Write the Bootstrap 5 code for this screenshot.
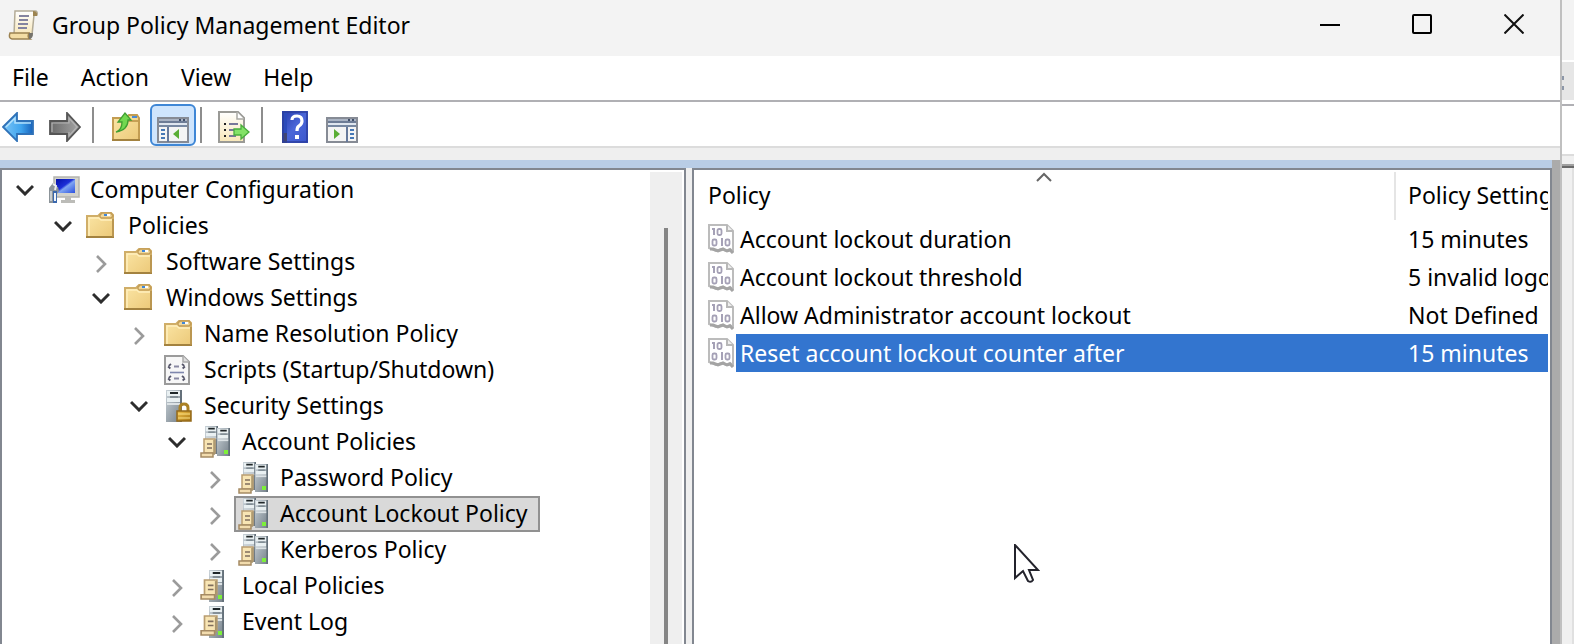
<!DOCTYPE html>
<html lang="en">
<head>
<meta charset="utf-8">
<meta name="viewport" content="width=device-width, initial-scale=1">
<title>Group Policy Management Editor</title>
<link href="https://cdn.jsdelivr.net/npm/bootstrap@5.3.0/dist/css/bootstrap.min.css" rel="stylesheet">
<style>
  :root { --line: #828790; --face: #efefef; }
  body { font-family: "Noto Sans", "Open Sans", sans-serif; font-size: 23px; line-height: 36px; color: #000; background: #fff; }
  svg { display: block; flex-shrink: 0; }
  .plain { border: 0; padding: 0; background: transparent; color: inherit; border-radius: 0; }

  .title-bar { height: 56px; background: #f3f3f3; padding-left: 8px; }
  .title-bar h1 { font-size: 23px; line-height: 36px; font-weight: 400; padding: 7px 0 0 13px; }
  .title-bar .doc-icon { margin-top: 9px; }
  .caption-btn { width: 92px; height: 48px; }

  .menu-bar { height: 44px; padding: 0 0 2px 12px; gap: 32px; }
  .menu-bar a { color: #000; text-decoration: none; }
  .tool-bar { height: 48px; border-top: 2px solid #b0b0b4; border-bottom: 2px solid #dcdcdc; padding-top: 2px; gap: 1px; }
  .tool-btn { width: 46px; height: 42px; border: 2px solid transparent; border-radius: 6px; background: transparent; padding: 3px 0 0 5px; }
  .tool-btn.first-tool { width: 41px; padding-left: 0; }
  .tool-btn.pressed { background: #cfe5fd; border-color: #3f87d6; }
  .tool-rule { width: 2px; height: 36px; background: #8d8d8d; margin: 0 8px 0 3px; }
  .dock-gap { height: 12px; background: var(--face); }
  .dock-band { height: 8px; background: #b9cde6; }

  .work { background: var(--face); gap: 6px; }
  .tree-pane { flex: 0 0 686px; max-width: 60%; border: 2px solid var(--line); border-bottom: 0; background: #fff; padding: 2px 2px 0 4px; }
  .tree ul { padding-left: 38px; }
  .tree-row { height: 36px; }
  .twist { width: 38px; height: 36px; }
  .twist.closed { padding-top: 3px; }
  .node { height: 36px; border: 2px solid transparent; padding: 0 10px 0 2px; gap: 10px; line-height: 30px; white-space: nowrap; color: #000; text-decoration: none; }
  .node.chosen { background: #d9d9d9; border-color: #919191; }
  .node-text { padding-bottom: 2px; }
  .scroll-track { width: 32px; background: var(--face); padding-top: 56px; }
  .scroll-thumb { width: 4px; background: #858585; margin-right: 14px; }

  .list-pane { border: 2px solid var(--line); border-bottom: 0; background: #fff; padding: 2px 2px 0 0; }
  .policy-table { table-layout: fixed; width: 100%; border-collapse: collapse; }
  .policy-table th { height: 48px; font-weight: 400; padding: 0 0 2px 14px; vertical-align: middle; }
  .policy-table th:first-child { border-right: 2px solid #e5e5e5; }
  .policy-table td { height: 38px; padding: 0 0 0 13px; white-space: nowrap; overflow: hidden; }
  .policy-table th:last-child { padding-left: 12px; white-space: nowrap; overflow: hidden; }
  .policy-table td:first-child { padding-left: 14px; }
  .policy-name { margin-left: 2px; padding-left: 4px; line-height: 38px; }
  .chosen-row td:last-child, .chosen-row .policy-name { background: #3375cf; color: #fff; }
  .setting-col { width: 153px; }
  .edge { width: 8px; background: #ababab; }
  .pointer { left: 320px; top: 374px; }

  .behind { width: 14px; border-left: 2px solid #c0c0c0; background: #f0f0f0; }
  .behind-title { height: 62px; background: #f3f3f3; border-bottom: 2px solid #fff; }
  .behind-tab { height: 38px; background: #e6e6e6; padding-top: 14px; }
  .behind-menu { height: 52px; border-top: 2px solid #b0b0b4; border-bottom: 2px solid #dcdcdc; background: #fff; }
  .behind-gap { height: 4px; background: #fff; }
  .behind-head { height: 4px; border-top: 2px solid #a0a0a0; border-bottom: 2px solid #696969; margin-top: 8px; }
  .behind-body { border-right: 2px solid #e0e0e0; }
</style>
</head>
<body class="vh-100 overflow-hidden d-flex">

<svg width="0" height="0" class="position-absolute" aria-hidden="true">
  <defs>
    <linearGradient id="gFolder" x1="0" y1="0" x2="1" y2="1"><stop offset="0" stop-color="#fbe6a6"/><stop offset="1" stop-color="#ecc979"/></linearGradient>
    <linearGradient id="gBlue" x1="0" y1="0" x2="1" y2="0"><stop offset="0" stop-color="#7cc6f8"/><stop offset=".6" stop-color="#3fa4ee"/><stop offset="1" stop-color="#1762bb"/></linearGradient>
    <linearGradient id="gGray" x1="0" y1="0" x2="1" y2="0"><stop offset="0" stop-color="#6a6a6a"/><stop offset="1" stop-color="#a5a5a5"/></linearGradient>
    <linearGradient id="gPaper" x1="0" y1="0" x2="0" y2="1"><stop offset="0" stop-color="#fff"/><stop offset="1" stop-color="#f8e7b8"/></linearGradient>
    <linearGradient id="gSteel" x1="0" y1="0" x2="1" y2="1"><stop offset="0" stop-color="#c9d2d8"/><stop offset="1" stop-color="#747f88"/></linearGradient>
    <linearGradient id="gScreen" x1="0" y1="0" x2="1" y2="1"><stop offset="0" stop-color="#0510a8"/><stop offset=".45" stop-color="#1c2fd8"/><stop offset=".55" stop-color="#7fa5f2"/><stop offset="1" stop-color="#2b50e0"/></linearGradient>
    <linearGradient id="gHelp" x1="0" y1="0" x2="1" y2="1"><stop offset="0" stop-color="#2438a8"/><stop offset=".5" stop-color="#4a66d8"/><stop offset="1" stop-color="#3a55cc"/></linearGradient>
    <linearGradient id="gLock" x1="0" y1="0" x2="1" y2="1"><stop offset="0" stop-color="#efc04a"/><stop offset="1" stop-color="#a87512"/></linearGradient>

    <symbol id="open" viewBox="0 0 18 12"><path d="M1 2l8 8 8-8" fill="none" stroke="#2d2d2d" stroke-width="3"/></symbol>
    <symbol id="shut" viewBox="0 0 12 18"><path d="M2 1l8 8-8 8" fill="none" stroke="#9b9b9b" stroke-width="2.6"/></symbol>

    <symbol id="folder" viewBox="0 0 32 32">
      <path d="M1 6h11l3-3h10l2 2v22H1z" fill="url(#gFolder)" stroke="#d0ae68" stroke-width="2"/>
      <path d="M14 5l2-2h9l2 3-2 2H14z" fill="#efd79a" stroke="#c39d55" stroke-width="1.500"/>
      <path d="M18 5h3" stroke="#3f86d8" stroke-width="2"/><path d="M21 5h3" stroke="#fff" stroke-width="2"/>
      <path d="M3 26V8h10l2 2h11" fill="none" stroke="#fff0bd" stroke-width="1.500"/>
      <path d="M0 27h28" stroke="#a3823f" stroke-width="2"/><path d="M27 9v18" stroke="#b5914c" stroke-width="1.600"/>
    </symbol>

    <symbol id="computer" viewBox="0 0 32 32">
      <path d="M6 3h25v20H6z" fill="#d3d3cc" stroke="#b4b4ae" stroke-width="1.500"/>
      <path d="M8 5h19v14H8z" fill="url(#gScreen)"/>
      <path d="M17 23h6v3h4v3H13v-3h4z" fill="#bcbcb8"/>
      <path d="M1 14l4-5 2 3 3 1 1 4-2 3v4H6v5H1z" fill="#8c9499"/>
      <path d="M2 17h2v10H2z" fill="#c6cbce"/><path d="M5 10l3 2-1 4" stroke="#eee" stroke-width="2" fill="none"/>
      <path d="M5 17h4v12H5z" fill="#3b68ad"/><path d="M6 19h2v8H6z" fill="#f2f6fa"/>
    </symbol>

    <symbol id="script" viewBox="0 0 32 32">
      <path d="M3 2h18l6 6v22H3z" fill="#f7f7f7" stroke="#9b9b9b" stroke-width="2"/>
      <path d="M21 2v6h6" fill="#ddd" stroke="#aaa" stroke-width="1.500"/>
      <path d="M9 10l-3 2.500 3 2.500M20 10l3 2.500-3 2.500M9 22l-3 2.500 3 2.500M20 22l3 2.500-3 2.500" fill="none" stroke="#555569" stroke-width="1.800" stroke-dasharray="3 1"/>
      <path d="M12 12.500h5M12 24.500h5" stroke="#8a89a3" stroke-width="2"/><path d="M8 18.500h14" stroke="#7f87ad" stroke-width="1.600"/>
    </symbol>

    <symbol id="tower" viewBox="0 0 16 32" preserveAspectRatio="none">
      <path d="M0 0h16v32H0z" fill="url(#gSteel)"/><path d="M1 1h13v5H1zM1 8h13v4H1z" fill="#e9f0f2"/><path d="M4 2h8v2H4z" fill="#1f2629"/><path d="M4 7h8" stroke="#77838b" stroke-width="1.500"/>
      <path d="M1 14h14" stroke="#dce2e5" stroke-width="2"/><path d="M15 0v32" stroke="#64707a" stroke-width="2"/>
    </symbol>
    <symbol id="sheet" viewBox="0 0 16 20" preserveAspectRatio="none">
      <path d="M4 1h11v14H4z" fill="#f8e5b4" stroke="#b99d70" stroke-width="1.500"/><path d="M1 15h12v4H1z" fill="#f2dcae" stroke="#a58a63" stroke-width="1.500"/>
      <path d="M7 6h5M7 10h5" stroke="#7f6e5d" stroke-width="1.600"/><path d="M14 2v15" stroke="#a8946b" stroke-width="1.500"/>
    </symbol>
    <symbol id="secure" viewBox="0 0 32 32">
      <use href="#tower" x="4" y="0" width="16" height="32"/>
      <path d="M18 22v-4q0-4 4-4t4 4v4" fill="none" stroke="#aa8125" stroke-width="3"/>
      <path d="M15 21h14v10H15z" fill="url(#gLock)" stroke="#94691a" stroke-width="1.500"/><path d="M16 24h12M16 28h12" stroke="#ffe386" stroke-width="1.200"/>
    </symbol>
    <symbol id="servers" viewBox="0 0 32 32">
      <use href="#tower" x="5" y="0" width="13" height="28"/><use href="#tower" x="17" y="2" width="13" height="28"/>
      <path d="M24 24h4v4h-4z" fill="#7df03a"/><use href="#sheet" x="0" y="12" width="16" height="20"/>
    </symbol>
    <symbol id="server" viewBox="0 0 32 32">
      <use href="#tower" x="9" y="0" width="15" height="32"/>
      <path d="M18 25h4v4h-4z" fill="#7df03a"/><use href="#sheet" x="0" y="9" width="18" height="21"/>
    </symbol>

    <symbol id="console" viewBox="0 0 32 26">
      <path d="M1 1h30v24H1z" fill="#f4f4f4" stroke="#868b95" stroke-width="2"/><path d="M2 2h28v3H2z" fill="#aab4c4"/>
      <path d="M2 5h28" stroke="#6d7c96" stroke-width="2"/><path d="M22 3h2M26 3h2" stroke="#42506a" stroke-width="2"/><path d="M2 7h28" stroke="#dfe6ef" stroke-width="2"/><path d="M2 9h28" stroke="#7788a2" stroke-width="2"/>
    </symbol>

    <symbol id="policy" viewBox="0 0 26 30">
      <path d="M1 1h18l6 6v20l-3-2-4 2-5-2-5 2-7-3z" fill="#fff" stroke="#bcbcbc" stroke-width="2"/>
      <path d="M19 1v6h6" fill="#eee" stroke="#b8b8b8" stroke-width="2"/>
      <path d="M2 25h3l5 2 5-2 4 2 3-1 3 3" fill="none" stroke="#a4a4a4" stroke-width="3"/>
      <path d="M4 5h2v6M13 15h1v7" fill="none" stroke="#a5a1b6" stroke-width="2"/>
      <rect x="9.500" y="5" width="4" height="6" rx="1.500" fill="none" stroke="#a5a1b6" stroke-width="1.800"/>
      <rect x="4.500" y="15.500" width="4" height="6" rx="1.500" fill="none" stroke="#a5a1b6" stroke-width="1.800"/>
      <rect x="17.500" y="15.500" width="4" height="6" rx="1.500" fill="none" stroke="#a5a1b6" stroke-width="1.800"/>
    </symbol>
  </defs>
</svg>

<main class="flex-grow-1 d-flex flex-column overflow-hidden">
  <header class="title-bar d-flex align-items-start flex-shrink-0">
    <svg class="doc-icon" width="31" height="31" viewBox="0 0 31 31" aria-hidden="true">
      <path d="M7 2h20q3 0 2 4h-3l-2 20-18 0z" fill="url(#gPaper)" stroke="#b3ab96" stroke-width="1.500"/>
      <path d="M25 2q5 0 4 5h-4z" fill="#9d8450"/>
      <path d="M2 24h19q-2 4 1 6H4q-4-1-2-6z" fill="#f3dda4" stroke="#9c8250" stroke-width="1.500"/><path d="M21 24h4q0 6-4 6z" fill="#75736c"/>
      <path d="M11 7h10M11 11h9M10 15h10M10 19h9" stroke="#8584a0" stroke-width="1.800"/>
    </svg>
    <h1 class="mb-0 me-auto text-nowrap">Group Policy Management Editor</h1>
    <button class="plain caption-btn d-flex align-items-center justify-content-center" type="button" aria-label="Minimize"><svg width="20" height="20"><path d="M0 11h20" stroke="#000" stroke-width="2"/></svg></button>
    <button class="plain caption-btn d-flex align-items-center justify-content-center" type="button" aria-label="Maximize"><svg width="20" height="20"><rect x="1" y="1" width="18" height="18" rx="1" fill="none" stroke="#000" stroke-width="2"/></svg></button>
    <button class="plain caption-btn d-flex align-items-center justify-content-center" type="button" aria-label="Close"><svg width="20" height="20"><path d="M.5.5l19 19M19.500.5l-19 19" stroke="#111" stroke-width="2"/></svg></button>
  </header>

  <nav class="menu-bar d-flex align-items-center flex-shrink-0" aria-label="Menu">
    <a href="#">File</a><a href="#">Action</a><a href="#">View</a><a href="#">Help</a>
  </nav>

  <div class="tool-bar d-flex align-items-center flex-shrink-0" role="toolbar" aria-label="Tools">
    <button class="tool-btn first-tool" type="button" aria-label="Back"><svg width="32" height="30" viewBox="0 0 32 30"><path d="M1 15L15 1v8h16v13H15v7z" fill="url(#gBlue)" stroke="#2f72b8" stroke-width="1.800"/><path d="M4 15l9-9v5h16" fill="none" stroke="#b4e1fb" stroke-width="1.500"/></svg></button>
    <button class="tool-btn" type="button" aria-label="Forward"><svg width="32" height="30" viewBox="0 0 32 30"><path d="M31 15L18 1v8H1v13h17v7z" fill="url(#gGray)" stroke="#555" stroke-width="1.800"/><path d="M3 20v-9h17V6l8 9-8 9v-4" fill="none" stroke="#b4b4b4" stroke-width="1.200"/></svg></button>
    <span class="tool-rule"></span>
    <button class="tool-btn" type="button" aria-label="Up one level"><svg width="32" height="30" viewBox="0 0 32 30"><path d="M3 6h13l3-3h8l2 3v22H3z" fill="url(#gFolder)" stroke="#c39d52" stroke-width="2"/><path d="M16 9h12" stroke="#b98f43" stroke-width="1.500"/><path d="M22 5h5" stroke="#4a8bd5" stroke-width="2"/><path d="M2 28h28" stroke="#a3823f" stroke-width="2"/><path d="M6 20q6-2 6-10H8l7-9 6 7h-3q0 10-12 12z" fill="#72d84f" stroke="#3f9f32" stroke-width="1.300"/></svg></button>
    <button class="tool-btn pressed" type="button" aria-label="Show or hide console tree" aria-pressed="true"><svg width="32" height="32" viewBox="0 -6 32 32"><use href="#console" width="32" height="26"/><path d="M11 10v15" stroke="#66799b" stroke-width="2"/><path d="M4 13h4M4 17h4M4 21h4" stroke="#4678b6" stroke-width="2"/><path d="M22 12v10l-6-5z" fill="#5aae35"/></svg></button>
    <span class="tool-rule"></span>
    <button class="tool-btn" type="button" aria-label="Export list"><svg width="32" height="32" viewBox="0 0 32 32"><path d="M1 1h19l6 6v24H1z" fill="url(#gPaper)" stroke="#9a9a96" stroke-width="2"/><path d="M19 1v7h7" fill="#fff" stroke="#a9a9a4" stroke-width="1.500"/><path d="M6 13h2M6 19h2M6 25h2" stroke="#222" stroke-width="2"/><path d="M11 13h9M11 19h8M11 25h7" stroke="#78789a" stroke-width="1.800"/><path d="M16 18h7v-4l8 7-8 7v-4h-7z" fill="#83e267" stroke="#48ad3c" stroke-width="1.300"/></svg></button>
    <span class="tool-rule"></span>
    <button class="tool-btn" type="button" aria-label="Help"><svg width="32" height="32" viewBox="0 0 32 32"><path d="M3 0h26v32H3z" fill="url(#gHelp)"/><path d="M3 0h5v32H3z" fill="#2b4aba"/><path d="M3 22h5v10H3z" fill="#404573"/><path d="M4 1h24v30H4z" fill="none" stroke="#2c3f9f" stroke-width="1.500"/><path d="M13 9q0-4 5-4t5 5q0 3-3 5-2 1-2 5" fill="none" stroke="#fff" stroke-width="3.200"/><path d="M16 24h4v4h-4z" fill="#fff"/></svg></button>
    <button class="tool-btn" type="button" aria-label="Show or hide action pane"><svg width="32" height="32" viewBox="0 -6 32 32"><use href="#console" width="32" height="26"/><path d="M21 10v15" stroke="#66799b" stroke-width="2"/><path d="M24 13h4M24 17h4M24 21h4" stroke="#4678b6" stroke-width="2"/><path d="M8 12v10l6-5z" fill="#5aae35"/></svg></button>
  </div>
  <div class="dock-gap flex-shrink-0"></div>

  <div class="d-flex flex-grow-1 overflow-hidden">
    <div class="d-flex flex-column flex-grow-1 overflow-hidden">
      <div class="dock-band flex-shrink-0"></div>
      <div class="work d-flex flex-grow-1 overflow-hidden">
        <nav class="tree-pane d-flex overflow-hidden" aria-label="Console tree">
          <div class="tree flex-grow-1 overflow-hidden">
            <div class="tree-row d-flex"><button class="plain twist d-flex align-items-center justify-content-center" type="button" aria-label="Collapse"><svg width="18" height="12"><use href="#open"/></svg></button><a class="node d-flex align-items-center" href="#"><svg width="32" height="32"><use href="#computer"/></svg><span class="node-text">Computer Configuration</span></a></div>
            <ul class="list-unstyled mb-0"><li>
              <div class="tree-row d-flex"><button class="plain twist d-flex align-items-center justify-content-center" type="button" aria-label="Collapse"><svg width="18" height="12"><use href="#open"/></svg></button><a class="node d-flex align-items-center" href="#"><svg width="32" height="32"><use href="#folder"/></svg><span class="node-text">Policies</span></a></div>
              <ul class="list-unstyled mb-0">
                <li class="tree-row d-flex"><button class="plain twist closed d-flex align-items-center justify-content-center" type="button" aria-label="Expand"><svg width="12" height="18"><use href="#shut"/></svg></button><a class="node d-flex align-items-center" href="#"><svg width="32" height="32"><use href="#folder"/></svg><span class="node-text">Software Settings</span></a></li>
                <li>
                  <div class="tree-row d-flex"><button class="plain twist d-flex align-items-center justify-content-center" type="button" aria-label="Collapse"><svg width="18" height="12"><use href="#open"/></svg></button><a class="node d-flex align-items-center" href="#"><svg width="32" height="32"><use href="#folder"/></svg><span class="node-text">Windows Settings</span></a></div>
                  <ul class="list-unstyled mb-0">
                    <li class="tree-row d-flex"><button class="plain twist closed d-flex align-items-center justify-content-center" type="button" aria-label="Expand"><svg width="12" height="18"><use href="#shut"/></svg></button><a class="node d-flex align-items-center" href="#"><svg width="32" height="32"><use href="#folder" x="2"/></svg><span class="node-text">Name Resolution Policy</span></a></li>
                    <li class="tree-row d-flex"><span class="twist"></span><a class="node d-flex align-items-center" href="#"><svg width="32" height="32"><use href="#script"/></svg><span class="node-text">Scripts (Startup/Shutdown)</span></a></li>
                    <li>
                      <div class="tree-row d-flex"><button class="plain twist d-flex align-items-center justify-content-center" type="button" aria-label="Collapse"><svg width="18" height="12"><use href="#open"/></svg></button><a class="node d-flex align-items-center" href="#"><svg width="32" height="32"><use href="#secure"/></svg><span class="node-text">Security Settings</span></a></div>
                      <ul class="list-unstyled mb-0">
                        <li>
                          <div class="tree-row d-flex"><button class="plain twist d-flex align-items-center justify-content-center" type="button" aria-label="Collapse"><svg width="18" height="12"><use href="#open"/></svg></button><a class="node d-flex align-items-center" href="#"><svg width="32" height="32"><use href="#servers"/></svg><span class="node-text">Account Policies</span></a></div>
                          <ul class="list-unstyled mb-0">
                            <li class="tree-row d-flex"><button class="plain twist closed d-flex align-items-center justify-content-center" type="button" aria-label="Expand"><svg width="12" height="18"><use href="#shut"/></svg></button><a class="node d-flex align-items-center" href="#"><svg width="32" height="32"><use href="#servers"/></svg><span class="node-text">Password Policy</span></a></li>
                            <li class="tree-row d-flex"><button class="plain twist closed d-flex align-items-center justify-content-center" type="button" aria-label="Expand"><svg width="12" height="18"><use href="#shut"/></svg></button><a class="node chosen d-flex align-items-center" href="#" aria-current="true"><svg width="32" height="32"><use href="#servers"/></svg><span class="node-text">Account Lockout Policy</span></a></li>
                            <li class="tree-row d-flex"><button class="plain twist closed d-flex align-items-center justify-content-center" type="button" aria-label="Expand"><svg width="12" height="18"><use href="#shut"/></svg></button><a class="node d-flex align-items-center" href="#"><svg width="32" height="32"><use href="#servers"/></svg><span class="node-text">Kerberos Policy</span></a></li>
                          </ul>
                        </li>
                        <li class="tree-row d-flex"><button class="plain twist closed d-flex align-items-center justify-content-center" type="button" aria-label="Expand"><svg width="12" height="18"><use href="#shut"/></svg></button><a class="node d-flex align-items-center" href="#"><svg width="32" height="32"><use href="#server"/></svg><span class="node-text">Local Policies</span></a></li>
                        <li class="tree-row d-flex"><button class="plain twist closed d-flex align-items-center justify-content-center" type="button" aria-label="Expand"><svg width="12" height="18"><use href="#shut"/></svg></button><a class="node d-flex align-items-center" href="#"><svg width="32" height="32"><use href="#server"/></svg><span class="node-text">Event Log</span></a></li>
                      </ul>
                    </li>
                  </ul>
                </li>
              </ul>
            </li></ul>
          </div>
          <div class="scroll-track d-flex justify-content-end flex-shrink-0"><div class="scroll-thumb"></div></div>
        </nav>

        <section class="list-pane flex-grow-1 overflow-hidden position-relative" aria-label="Policies">
          <table class="policy-table">
            <colgroup><col><col class="setting-col"></colgroup>
            <thead><tr>
              <th scope="col" class="position-relative">Policy<svg class="position-absolute top-0 start-50 translate-middle-x" width="16" height="10" aria-hidden="true"><path d="M1 9l7-7 7 7" fill="none" stroke="#666" stroke-width="2"/></svg></th>
              <th scope="col">Policy Setting</th>
            </tr></thead>
            <tbody>
              <tr><td><div class="d-flex align-items-center"><svg width="26" height="30"><use href="#policy"/></svg><span class="policy-name flex-grow-1">Account lockout duration</span></div></td><td>15 minutes</td></tr>
              <tr><td><div class="d-flex align-items-center"><svg width="26" height="30"><use href="#policy"/></svg><span class="policy-name flex-grow-1">Account lockout threshold</span></div></td><td>5 invalid logon attempts</td></tr>
              <tr><td><div class="d-flex align-items-center"><svg width="26" height="30"><use href="#policy"/></svg><span class="policy-name flex-grow-1">Allow Administrator account lockout</span></div></td><td>Not Defined</td></tr>
              <tr class="chosen-row"><td><div class="d-flex align-items-center"><svg width="26" height="30"><use href="#policy"/></svg><span class="policy-name flex-grow-1">Reset account lockout counter after</span></div></td><td>15 minutes</td></tr>
            </tbody>
          </table>
          <svg class="pointer position-absolute" width="26" height="40" viewBox="0 0 26 40" aria-hidden="true"><path d="M1 1v33l8-7 5 10q3 2 5-1l-4-10h9z" fill="#fff" stroke="#23232c" stroke-width="2"/></svg>
        </section>
      </div>
    </div>
    <div class="edge flex-shrink-0"></div>
  </div>
</main>

<aside class="behind d-flex flex-column flex-shrink-0" aria-hidden="true">
  <div class="behind-title"></div>
  <div class="behind-tab"><svg width="2" height="14"><path d="M0 0h2v4H0zM0 10h2v4H0z" fill="#8d97a8"/></svg></div>
  <div class="behind-gap"></div>
  <div class="behind-menu"></div>
  <div class="behind-head"></div>
  <div class="behind-body flex-grow-1"></div>
</aside>

<script src="https://cdn.jsdelivr.net/npm/bootstrap@5.3.0/dist/js/bootstrap.bundle.min.js"></script>
</body>
</html>
